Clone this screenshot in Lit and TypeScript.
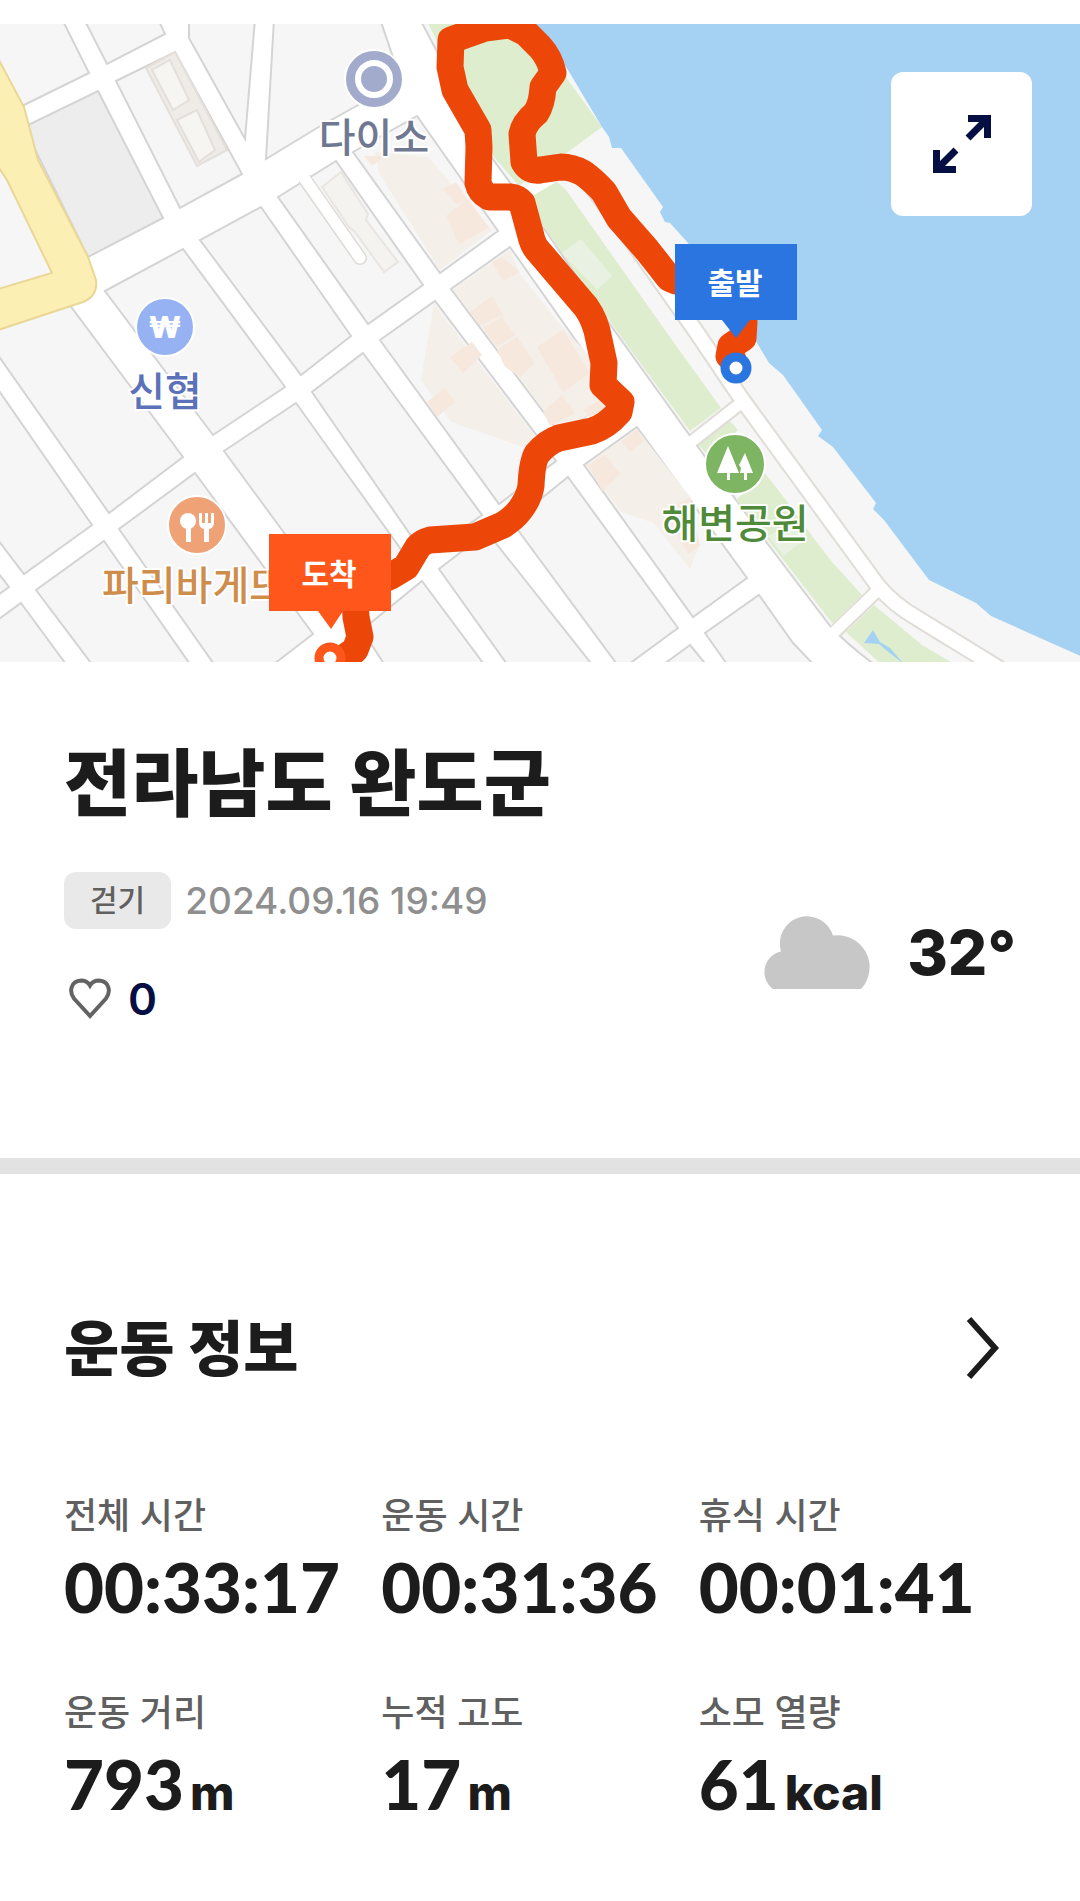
import { LitElement, html, css, svg } from "lit";
import { customElement, property } from "lit/decorators.js";

const BLOCKS = [
  "-5,-5 62,-5 89,49 24,81 -5,95",
  "84,-5 107,40 165,10 158,-5",
  "116,57 175,28 242,150 180,184",
  "189,-5 189,14 245,115 255,-5",
  "274,-5 266,135 317,104 401,57 380,-5",
  "417,92 498,207 440,249 353,128",
  "278,173 336,137 423,261 368,300",
  "261,183 351,312 301,351 200,216",
  "105,267 183,225 285,363 213,411",
  "363,329 482,491 425,532 312,368",
  "296,379 410,538 340,585 224,427",
  "195,449 313,610 270,643 216,643 119,505",
  "104,517 192,643 94,643 36,566",
  "21,579 68,643 -5,643 -5,598",
  "-5,361 92,501 24,550 -5,512",
  "-5,545 9,563 -5,573",
  "-5,327 109,489 183,433 60,268 -5,290",
  "-5,130 60,250 -5,272",
  "380,316 435,277 556,437 499,480",
  "510,223 615,372 560,410 451,265",
  "637,403 747,554 693,593 584,441",
  "568,453 678,604 625,643 619,643 512,498",
  "487,508 594,643 509,643 439,545",
  "422,557 486,643 386,643 362,606",
  "759,571 793,619 816,643 729,643 705,609",
  "690,621 708,643 660,643",
];

const BEIGE = [
  "375,128 428,133 492,206 440,246 379,149",
  "434,280 421,356 451,398 523,423 552,435",
  "510,226 520,250 563,304 590,332 607,380 560,408 453,266",
  "637,405 586,441 621,488 654,499 690,545 698,524 690,473",
];

const PEACH = [
  "364,132 385,132 372,142",
  "443,165 456,158 468,176 456,180",
  "446,192 468,175 489,204 459,220",
  "492,238 502,233 520,248 503,257",
  "470,288 492,272 503,291 480,301",
  "483,304 502,293 515,311 497,323",
  "497,326 517,313 535,339 520,353 505,343",
  "450,333 472,318 482,331 463,349",
  "427,378 445,364 455,378 437,393",
  "537,323 563,306 590,349 563,368",
  "543,388 562,371 575,389 550,402",
  "583,386 600,376 607,383 590,393",
  "621,418 637,405 644,417 630,428",
  "588,441 605,431 620,450 602,467",
  "676,482 690,473 700,522 688,530 674,504",
];

const ROUTE_IN = "M733 336L729 332L731 322L743 314L744 298L741 280";
const ROUTE_MAIN =
  "M676 257L669 254L647 226L619 194L604 168Q593 156 583 149Q572 143 561 143L540 146Q530 148 524 138L522 110Q524 99 536 89Q542 80 543 63L553 49Q550 34 540 23L526 9L510 1L485 4L451 16L450 43L455 66L478 106L479 123L478 159Q480 168 489 173L510 173Q518 174 522 179L532 216Q534 223 540 229L586 283Q596 297 599 316L604 339L603 361L621 378L619 388Q607 402 592 407L559 414Q547 418 537 430Q532 438 531 462Q529 474 520 486Q514 494 503 501L475 513L430 516Q422 518 418 523L406 543L391 552L360 565L355 575L356 593L360 613L355 626L344 634L330 636";

@customElement("route-map")
export class RouteMap extends LitElement {
  static styles = css`
    :host {
      display: block;
      position: relative;
    }
    .canvas {
      display: block;
      width: 100%;
      height: auto;
    }
    .block {
      fill: #f6f6f6;
      stroke: #d4d4d4;
      stroke-width: 2;
    }
    .place {
      font: 500 40px "Noto Sans CJK KR", sans-serif;
      text-anchor: middle;
      paint-order: stroke;
      stroke: #fff;
      stroke-width: 4;
      stroke-linejoin: round;
    }
    .won {
      font: 900 30px Inter, sans-serif;
      text-anchor: middle;
      fill: #fff;
    }
    .pin {
      font: 700 30px "Noto Sans CJK KR", sans-serif;
      text-anchor: middle;
      fill: #fff;
    }
    .expand {
      position: absolute;
      top: 48px;
      right: 48px;
      display: grid;
      place-items: center;
      width: 141px;
      height: 144px;
      padding: 0;
      border: 0;
      border-radius: 12px;
      background: #fff;
      color: #050f44;
      cursor: pointer;
    }
  `;

  render() {
    return html`
      <svg class="canvas" viewBox="0 0 1080 638" role="img" aria-label="운동 경로 지도">
        <rect width="1080" height="638" fill="#fff" />
        ${BLOCKS.map((p) => svg`<polygon class="block" points=${p} />`)}
        <polygon points="98,67 163,194 88,233 24,103" fill="#ededed" stroke="#d4d4d4" stroke-width="2" />
        ${BEIGE.map((p) => svg`<polygon points=${p} fill="#f4efe9" />`)}
        ${PEACH.map((p) => svg`<polygon points=${p} fill="#f7e8dd" />`)}
        <g stroke="#e4dfda" stroke-width="2">
          <polygon points="146,44 175,28 227,126 197,142" fill="#efebe7" />
          <polygon points="152,46 170,36 189,76 173,86" fill="#f6f5f2" />
          <polygon points="177,96 197,86 215,126 199,138" fill="#f6f5f2" />
          <polygon points="322,163 341,148 368,190 366,196 398,238 384,248 355,208 349,203" fill="#f4f3f0" stroke="#e9e6e1" />
        </g>
        <path d="M306 157L360 234" stroke="#dedad6" stroke-width="14" stroke-linecap="round" />
        <path d="M302 151L360 234" stroke="#fff" stroke-width="11" stroke-linecap="round" />

        <path d="M-5 28L0 38L24 83L38 136L88 233L96 256Q98 272 83 278L-5 307V266L52 249L7 156L-5 138Z" fill="#fcefb4" stroke="#ead796" stroke-width="2" />

        <path d="M420 -5L492 134L547 209L614 306L767 519L831 603Q850 623 878 643H1085V-5Z" fill="#f6f6f6" stroke="#d4d4d4" stroke-width="2" />
        <g fill="#dfedcf">
          <path d="M426 -5H530L568 56L602 103L568 128L519 162L494 133Z" />
          <path d="M519 172L557 158L566 166L672 316L721 384L690 407L614 303L547 207Z" />
          <path d="M698 420L729 396L738 406L710 434Z" />
          <path d="M736 476L764 448L786 476L815 516L833 539L862 571L833 600L767 515Z" />
          <path d="M846 608L874 581L922 621L951 638L958 643H884Z" />
        </g>
        <path d="M581 215L612 252L597 266L562 229Z" fill="#e9f2e2" />
        <path d="M768 512L792 500L808 512L784 532Z" fill="#e9f2e2" />
        <path d="M873 606L880 618L890 624L904 640L886 626L879 620L864 619Z" fill="#a5d2f3" />

        <g fill="none" stroke="#e0dcd8">
          <path d="M590 160L630 214L695 306L741 374L878 562Q894 581 917 594L1000 645" stroke-width="18" />
          <path d="M694 416L741 379M835 608L877 567" stroke-width="15" />
        </g>
        <g fill="none" stroke="#fff">
          <path d="M590 160L630 214L695 306L741 374L878 562Q894 581 917 594L1000 645" stroke-width="14" />
          <path d="M686 422L741 379M827 615L877 567M508 180L562 148" stroke-width="11" />
        </g>

        <path d="M531 -5L568 46L602 103L609 113L612 124L621 124L663 183L660 188L665 198L670 199L688 219L720 265L753 313L757 319L769 339L783 351L822 406L818 412L833 423L876 479L873 485L884 496L929 556L976 579L991 592L1085 634V-5Z" fill="#a5d2f3" />

        <g fill="none" stroke="#ec4709" stroke-width="27" stroke-linejoin="round" stroke-linecap="round">
          <path d=${ROUTE_IN} />
          <path d=${ROUTE_MAIN} />
        </g>

        <g stroke="#fff" stroke-width="2">
          <circle cx="374" cy="55" r="29" fill="#a3abcd" />
          <circle cx="165" cy="303" r="29" fill="#97b2f3" />
          <circle cx="197" cy="501" r="29" fill="#f0a277" />
          <circle cx="735" cy="440" r="30" fill="#7db563" />
        </g>
        <circle cx="374" cy="55" r="16" fill="none" stroke="#fff" stroke-width="6" />
        <text class="won" x="165" y="314">₩</text>
        <g fill="#fff">
          <circle cx="188" cy="497" r="8" />
          <path d="M186 500H191V518H186Z" />
          <path d="M199 489H202V499H205V489H208V499H211V489H214V498Q214 504 209 505V518H204V505Q199 504 199 498Z" />
          <path d="M728 422L739 449H730V456H727V449H717Z" />
          <path d="M745 429L753 449H747V456H744V449H740L741 444L739 441Z" />
        </g>

        <text class="place" x="374" y="128" fill="#6f7890">다이소</text>
        <text class="place" x="165" y="382" fill="#5b72b8">신협</text>
        <text class="place" x="194" y="576" fill="#cf8d4c">파리바게뜨</text>
        <text class="place" x="735" y="514" fill="#4f8a3a">해변공원</text>

        <path d="M675 220H797V296H750L736 314L722 296H675Z" fill="#2a75df" />
        <circle cx="736" cy="344" r="11" fill="#fff" stroke="#2a75df" stroke-width="9" />
        <text class="pin" x="735" y="270">출발</text>
        <path d="M269 510H391V587H343L331 605L318 587H269Z" fill="#ff561b" />
        <circle cx="330" cy="634" r="11" fill="#fff" stroke="#ff561b" stroke-width="9" />
        <text class="pin" x="329" y="561">도착</text>
      </svg>
      <button class="expand" type="button" aria-label="지도 크게 보기">
        <svg width="58" height="58" viewBox="0 0 58 58" fill="none" stroke="currentColor" stroke-width="7">
          <path d="M35 3.500H54.500V23M54 4L35 23" />
          <path d="M23 54.500H3.500V35M4 54L23 35" />
        </svg>
      </button>
    `;
  }
}

interface Metric {
  label: string;
  value: string;
  unit?: string;
}

@customElement("metric-grid")
export class MetricGrid extends LitElement {
  @property({ attribute: false }) metrics: Metric[] = [];

  static styles = css`
    :host {
      display: block;
    }
    .grid {
      display: grid;
      grid-template-columns: repeat(3, 1fr);
      row-gap: 66px;
      margin: 0;
    }
    .metric {
      display: flex;
      flex-direction: column;
      gap: 11px;
      white-space: nowrap;
    }
    .label {
      font-size: 36px;
      font-weight: 500;
      line-height: 48px;
      color: #606060;
    }
    .value {
      display: flex;
      align-items: baseline;
      gap: 6px;
      margin: 0;
      font: 900 69px/72px Lato, sans-serif;
      color: #1c1c1c;
    }
    .unit {
      font: 800 48px/72px Inter, sans-serif;
    }
  `;

  render() {
    return html`
      <dl class="grid">
        ${this.metrics.map(
          (m) => html`
            <div class="metric">
              <dt class="label">${m.label}</dt>
              <dd class="value">
                <span>${m.value}</span>${m.unit ? html`<span class="unit">${m.unit}</span>` : null}
              </dd>
            </div>
          `
        )}
      </dl>
    `;
  }
}

@customElement("app-root")
export class AppRoot extends LitElement {
  private metrics: Metric[] = [
    { label: "전체 시간", value: "00:33:17" },
    { label: "운동 시간", value: "00:31:36" },
    { label: "휴식 시간", value: "00:01:41" },
    { label: "운동 거리", value: "793", unit: "m" },
    { label: "누적 고도", value: "17", unit: "m" },
    { label: "소모 열량", value: "61", unit: "kcal" },
  ];

  static styles = css`
    :host {
      display: block;
      min-height: 100vh;
      padding-top: 24px;
      box-sizing: border-box;
      background: #fff;
      color: #1c1c1c;
      font-family: Inter, "Noto Sans CJK KR", sans-serif;
    }
    .summary {
      padding: 72px 64px 131px;
      border-bottom: 16px solid #e2e2e2;
    }
    .title {
      margin: 0 0 50px;
      font: 900 73px/88px "Noto Sans CJK KR", sans-serif;
    }
    .details {
      display: flex;
      justify-content: space-between;
      align-items: center;
    }
    .facts {
      display: flex;
      flex-direction: column;
      align-items: flex-start;
      gap: 42px;
    }
    .meta {
      display: flex;
      align-items: center;
      gap: 14px;
    }
    .chip {
      padding: 0 26px;
      border-radius: 12px;
      background: #e9e9e9;
      color: #606060;
      font-size: 30px;
      font-weight: 500;
      line-height: 57px;
    }
    .date {
      color: #8f8f8f;
      font-size: 37px;
      font-weight: 500;
      line-height: 56px;
    }
    .like {
      display: flex;
      align-items: center;
      gap: 16px;
      padding: 0 4px;
      border: 0;
      background: none;
      color: #050f44;
      font: 600 44px/56px Inter, sans-serif;
      cursor: pointer;
    }
    .weather {
      display: flex;
      align-items: center;
      gap: 36px;
      padding-top: 7px;
      font-size: 62px;
      font-weight: 800;
      line-height: 72px;
    }
    .cloud {
      overflow: visible;
    }
    .info {
      padding: 138px 64px 64px;
    }
    .info-head {
      display: flex;
      justify-content: space-between;
      align-items: center;
      margin-bottom: 108px;
      padding-right: 16px;
      color: inherit;
      text-decoration: none;
    }
    .heading {
      margin: 0;
      padding-bottom: 6px;
      font: 900 60px/66px "Noto Sans CJK KR", sans-serif;
    }
  `;

  render() {
    return html`
      <route-map></route-map>
      <section class="summary">
        <h1 class="title">전라남도 완도군</h1>
        <div class="details">
          <div class="facts">
            <div class="meta">
              <span class="chip">걷기</span>
              <time class="date" datetime="2024-09-16T19:49">2024.09.16 19:49</time>
            </div>
            <button class="like" type="button" aria-label="좋아요 0">
              <svg width="44" height="44" viewBox="0 0 44 44" fill="none" stroke="#636363" stroke-width="4">
                <path d="M22 39L6 21.500C1 15 2.500 4 13 3.500C17.500 3.500 20.500 6 22 8.500C23.500 6 26.500 3.500 31 3.500C41.500 4 43 15 38 21.500Z" />
              </svg>
              <span>0</span>
            </button>
          </div>
          <div class="weather">
            <svg class="cloud" width="106" height="72" viewBox="0 0 106 72" fill="#c7c7c7" role="img" aria-label="흐림">
              <path d="M8 72A21 21 0 0 1 16 34.500A27 27 0 0 1 68 18.500A32 32 0 0 1 96 72Z" />
            </svg>
            <span>32°</span>
          </div>
        </div>
      </section>
      <section class="info">
        <a class="info-head" href="#workout">
          <h2 class="heading">운동 정보</h2>
          <svg width="34" height="64" viewBox="0 0 34 64" fill="none" stroke="currentColor" stroke-width="6" aria-hidden="true">
            <path d="M3 3L29 32L3 61" />
          </svg>
        </a>
        <metric-grid id="workout" .metrics=${this.metrics}></metric-grid>
      </section>
    `;
  }
}
